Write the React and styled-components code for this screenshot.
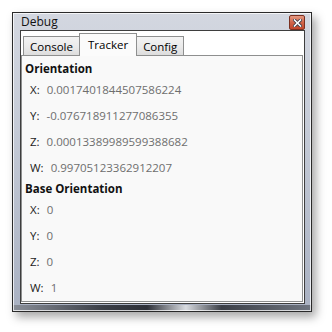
import * as React from 'react';
import styled, { createGlobalStyle } from 'styled-components';

const Global = createGlobalStyle`
  html, body {
    margin: 0;
    padding: 0;
    background: #ffffff;
  }
  body {
    box-sizing: border-box;
    width: 332px;
    height: 332px;
    padding: 12px 0 0 12px;
    overflow: hidden;
    font-family: "Open Sans", "Noto Sans", sans-serif;
  }
`;

const Window = styled.div`
  box-sizing: border-box;
  width: 300px;
  height: 300px;
  border: 1px solid #2a2a2a;
  padding: 0 6px 7px 7px;
  display: flex;
  flex-direction: column;
  background:
    linear-gradient(to right, #8a8f99, #3b3f47 30%, #2d3038 45%, #d8dbe0 58%, #3b3f47 70%, #6f7580) bottom / 100% 6px no-repeat,
    linear-gradient(#d3d7e0, #c4cad6 40%, #a9b1c2);
  box-shadow: inset 0 0 0 1px rgba(255, 255, 255, 0.75), 4px 5px 9px rgba(0, 0, 0, 0.35);
`;

const TitleBar = styled.div`
  height: 23px;
  display: flex;
  align-items: center;
  justify-content: space-between;
`;

const Title = styled.span`
  font-size: 12px;
  color: #111;
  margin-left: 1px;
`;

const CloseButton = styled.div`
  width: 16px;
  height: 15px;
  box-sizing: border-box;
  border: 1px solid #7a3020;
  border-radius: 2px;
  margin-top: 2px;
  background: linear-gradient(#e59a83, #d0654a 50%, #c2472c);
  display: flex;
  align-items: center;
  justify-content: center;
`;

const Client = styled.div`
  flex: 1;
  border: 1px solid #3e3e3e;
  background: #ffffff;
  padding: 1px 1px 1px 0;
  display: flex;
  flex-direction: column;
`;

const TabStrip = styled.div`
  display: flex;
  align-items: flex-end;
  height: 22px;
  padding-left: 2px;
  margin-top: 1px;
  position: relative;
  z-index: 1;
`;

const Tab = styled.div`
  box-sizing: border-box;
  font-size: 11.5px;
  color: #000;
  border: 1px solid #8e8f8f;
  border-bottom: none;
  margin-left: -1px;
  padding: 0 ${({ active }) => (active ? 8 : 6)}px;
  height: ${({ active }) => (active ? 23 : 19)}px;
  line-height: ${({ active }) => (active ? 21 : 19)}px;
  margin-bottom: ${({ active }) => (active ? -1 : 0)}px;
  background: ${({ active }) =>
    active ? '#fbfbfb' : 'linear-gradient(#f3f3f3, #ebebeb 50%, #dddddd)'};
  &:first-child {
    margin-left: 0;
  }
`;

const Panel = styled.div`
  flex: 1;
  border: 1px solid #8e8f8f;
  background: #f9f9f9;
  padding-top: 5px;
`;

const Heading = styled.div`
  font-size: 11.5px;
  font-weight: 700;
  height: 16px;
  line-height: 16px;
  padding-left: 3px;
  color: #111;
`;

const Row = styled.div`
  display: flex;
  height: 26px;
  line-height: 26px;
  font-size: 11.5px;
  padding-left: 8px;
`;

const Label = styled.span`
  color: #1c1c1c;
  margin-right: 7px;
`;

const Value = styled.span`
  color: #6e6e6e;
`;

const sections = [
  {
    title: 'Orientation',
    rows: [
      ['X:', '0.0017401844507586224'],
      ['Y:', '-0.076718911277086355'],
      ['Z:', '0.00013389989599388682'],
      ['W:', '0.99705123362912207'],
    ],
  },
  {
    title: 'Base Orientation',
    rows: [
      ['X:', '0'],
      ['Y:', '0'],
      ['Z:', '0'],
      ['W:', '1'],
    ],
  },
];

export default function App() {
  return (
    <>
      <Global />
      <Window>
        <TitleBar>
          <Title>Debug</Title>
          <CloseButton>
            <svg width="9" height="8" viewBox="0 0 9 8">
              <path d="M1.5 1 L7.5 7 M7.5 1 L1.5 7" stroke="#3a3a44" strokeWidth="3.2" strokeLinecap="square" />
              <path d="M1.5 1 L7.5 7 M7.5 1 L1.5 7" stroke="#ffffff" strokeWidth="1.6" strokeLinecap="square" />
            </svg>
          </CloseButton>
        </TitleBar>
        <Client>
          <TabStrip>
            <Tab>Console</Tab>
            <Tab active>Tracker</Tab>
            <Tab>Config</Tab>
          </TabStrip>
          <Panel>
            {sections.map((s) => (
              <React.Fragment key={s.title}>
                <Heading>{s.title}</Heading>
                {s.rows.map(([k, v]) => (
                  <Row key={k}>
                    <Label>{k}</Label>
                    <Value>{v}</Value>
                  </Row>
                ))}
              </React.Fragment>
            ))}
          </Panel>
        </Client>
      </Window>
    </>
  );
}
